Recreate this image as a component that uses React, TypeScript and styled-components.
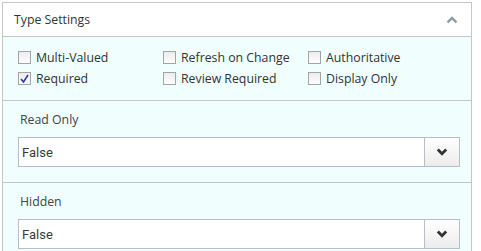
import React from 'react';
import styled, { createGlobalStyle } from 'styled-components';

const GlobalStyle = createGlobalStyle`
  body {
    margin: 0;
    background: #ffffff;
    font-family: "Open Sans", "Liberation Sans", sans-serif;
    color: #333333;
  }
`;

const Panel = styled.div`
  margin: 2px 0 0 2px;
  width: 468px;
  border: 1px solid #c6c6c6;
  border-bottom: none;
  background: #f0fefe;
`;

const Header = styled.div`
  height: 33px;
  display: flex;
  align-items: center;
  justify-content: space-between;
  padding: 0 13px 0 11px;
  background: #ffffff;
  border-bottom: 1px solid #c6c6c6;
  font-size: 12.3px;
  color: #333;
`;

const Checks = styled.div`
  display: grid;
  grid-template-columns: 145px 145px 145px;
  row-gap: 3px;
  padding: 11px 0 13px 15px;
  border-bottom: 1px solid #c6c6c6;
`;

const CheckLabel = styled.label`
  display: flex;
  align-items: center;
  gap: 5px;
  height: 18px;
  font-size: 12.3px;
  color: #333;
`;

const Box = styled.span<{ $checked?: boolean }>`
  width: 11px;
  height: 11px;
  border: 1px solid #a4a4a4;
  background: linear-gradient(#ececec, #fdfdfd);
  display: flex;
  align-items: center;
  justify-content: center;
`;

const Field = styled.div`
  padding: 10px 11px 15px 15px;
  border-bottom: 1px solid #c6c6c6;
`;

const FieldLabel = styled.div`
  font-size: 12.3px;
  line-height: 18px;
  color: #444;
  margin: 0 0 8px 2px;
`;

const Select = styled.div`
  display: flex;
  height: 28px;
  border: 1px solid #b9bccb;
  background: #ffffff;
`;

const Value = styled.div`
  flex: 1;
  display: flex;
  align-items: center;
  padding: 1px 0 0 3px;
  font-family: Roboto, "Liberation Sans", sans-serif;
  font-size: 13px;
  font-weight: 400;
  color: #3a3a3a;
`;

const DropButton = styled.div`
  width: 34px;
  border-left: 1px solid #b9bccb;
  background: linear-gradient(#ffffff, #ececec);
  display: flex;
  align-items: center;
  justify-content: center;
`;

function Check({ label, checked }: { label: string; checked?: boolean }) {
  return (
    <CheckLabel>
      <Box $checked={checked}>
        {checked && (
          <svg width="9" height="9" viewBox="0 0 9 9">
            <path d="M1 5 L3.5 8 L8 1" fill="none" stroke="#2a3c9c" strokeWidth="1.6" />
          </svg>
        )}
      </Box>
      {label}
    </CheckLabel>
  );
}

function Dropdown({ label, value }: { label: string; value: string }) {
  return (
    <Field>
      <FieldLabel>{label}</FieldLabel>
      <Select>
        <Value>{value}</Value>
        <DropButton>
          <svg width="12" height="8" viewBox="0 0 12 8">
            <path d="M1.8 1.5 L6 5.8 L10.2 1.5" fill="none" stroke="#333" strokeWidth="2.8" />
          </svg>
        </DropButton>
      </Select>
    </Field>
  );
}

export default function App() {
  return (
    <>
      <GlobalStyle />
      <Panel>
        <Header>
          <span>Type Settings</span>
          <svg width="12" height="8" viewBox="0 0 12 8">
            <path d="M1.5 6.5 L6 2 L10.5 6.5" fill="none" stroke="#8c96a8" strokeWidth="2.4" />
          </svg>
        </Header>
        <Checks>
          <Check label="Multi-Valued" />
          <Check label="Refresh on Change" />
          <Check label="Authoritative" />
          <Check label="Required" checked />
          <Check label="Review Required" />
          <Check label="Display Only" />
        </Checks>
        <Dropdown label="Read Only" value="False" />
        <Dropdown label="Hidden" value="False" />
      </Panel>
    </>
  );
}
